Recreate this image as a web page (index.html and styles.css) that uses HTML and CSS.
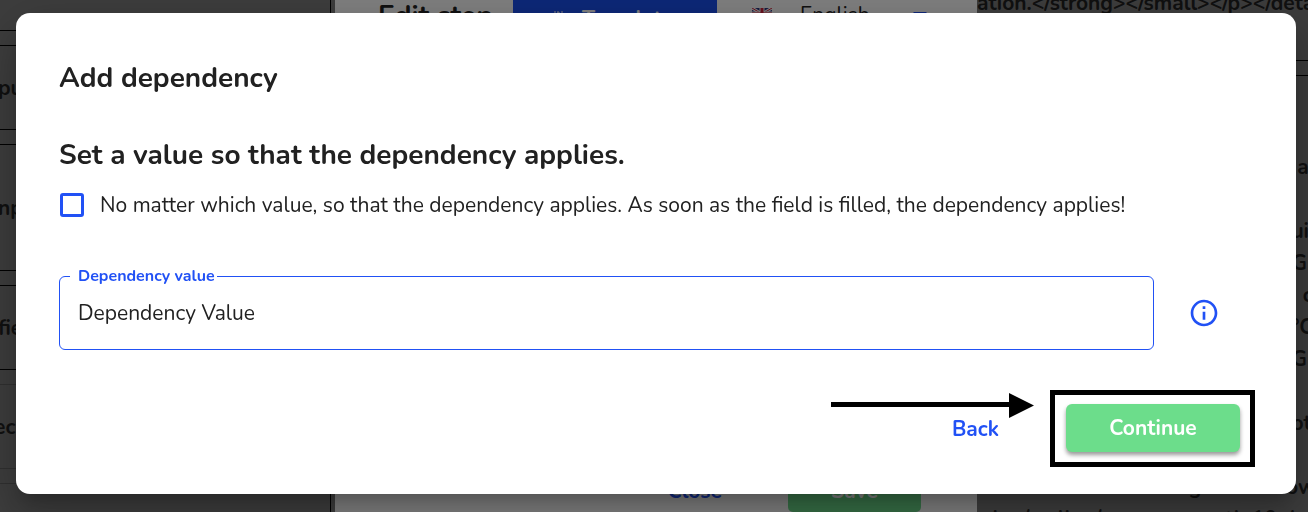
FILE: index.html
```html
<!DOCTYPE html>
<html lang="en">
<head>
    <meta charset="UTF-8">
    <meta name="viewport" content="width=device-width, initial-scale=1">
    <title>Add dependency</title>
    <link rel="stylesheet" href="styles.css">
</head>
<body>

<!-- page behind the dialog -->
<div class="page" aria-hidden="true">
    <div class="fields">
        <div class="field-card field-card-first"></div>
        <div class="field-card">put</div>
        <div class="field-card field-card-tall">np</div>
        <div class="field-card">field</div>
        <div class="field-card field-card-muted">eck</div>
        <div class="field-card field-card-muted"></div>
    </div>

    <div class="editor">
        <div class="editor-header">
            <span class="editor-title">Edit step</span>
            <span class="translate">
                <svg class="translate-icon" viewBox="0 0 14 14" width="14" height="14">
                    <path d="M3 1h2M6 2h3M10 1h2M7 0v13M1 4h12M3 4l8 8M11 4l-8 8" stroke="#fff" stroke-width="1"/>
                </svg>
                <span>Translate</span>
            </span>
            <span class="language">
                <svg class="flag" viewBox="0 0 20 12" width="20" height="12">
                    <rect width="20" height="12" fill="#2a3580"/>
                    <path d="M0 0l20 12M20 0L0 12" stroke="#fff" stroke-width="3"/>
                    <path d="M0 0l20 12M20 0L0 12" stroke="#d0203a" stroke-width="1"/>
                    <path d="M10 0v12M0 6h20" stroke="#fff" stroke-width="5"/>
                    <path d="M10 0v12M0 6h20" stroke="#d0203a" stroke-width="3"/>
                </svg>
                <span>English</span>
                <span class="caret"></span>
            </span>
        </div>
        <div class="editor-footer">
            <span class="editor-close">Close</span>
            <span class="editor-save">Save</span>
        </div>
    </div>

    <div class="preview">
        <div class="preview-head">ation.&lt;/strong&gt;&lt;/small&gt;&lt;/p&gt;&lt;/details&gt;</div>
        <div class="preview-body">
            <div class="line">&nbsp;a</div>
            <div class="line"></div>
            <div class="line">uin</div>
            <div class="line">G</div>
            <div class="line">&nbsp;&nbsp;c</div>
            <div class="line">°C</div>
            <div class="line">G</div>
            <div class="line">.</div>
            <div class="line">ot</div>
            <div class="line"></div>
            <div class="line line-long">g rooms now</div>
            <div class="line line-full">alen/mellen/measurementh 10 d</div>
        </div>
    </div>
</div>

<div class="backdrop">
    <div class="dialog" role="dialog" aria-labelledby="dialog-title">
        <h1 id="dialog-title">Add dependency</h1>
        <h2>Set a value so that the dependency applies.</h2>

        <div class="check-row">
            <input type="checkbox" id="any-value">
            <label for="any-value">No matter which value, so that the dependency applies. As soon as the field is filled, the dependency applies!</label>
        </div>

        <div class="value-row">
            <fieldset class="value-field">
                <legend><label for="dep-value">Dependency value</label></legend>
                <input type="text" id="dep-value" value="Dependency Value">
            </fieldset>
            <button type="button" class="info" aria-label="Info">
                <svg viewBox="0 0 24 24" width="32" height="32">
                    <path fill="currentColor" d="M11 7h2v2h-2zm0 4h2v6h-2zm1-9C6.480 2 2 6.480 2 12s4.480 10 10 10 10-4.480 10-10S17.520 2 12 2zm0 18c-4.410 0-8-3.590-8-8s3.590-8 8-8 8 3.590 8 8-3.590 8-8 8z"/>
                </svg>
            </button>
        </div>

        <div class="actions">
            <div class="back-wrap">
                <button type="button" class="back">Back</button>
                <svg class="arrow" viewBox="0 0 203 26" width="203" height="26">
                    <path d="M0 9h178V0l25 12.500L178 25V14H0z"/>
                </svg>
            </div>
            <div class="highlight">
                <button type="button" class="continue">Continue</button>
            </div>
        </div>
    </div>
</div>

</body>
</html>
```
FILE: styles.css
```css
* {
    box-sizing: border-box;
}
body {
    margin: 0;
    font-family: Nunito, Lato, "Open Sans", sans-serif;
    font-size: 21px;
    color: #212121;
    overflow: hidden;
}
button,
input {
    font: inherit;
}

/* page behind the dialog */
.page {
    display: grid;
    grid-template-columns: 335fr 642fr 331fr;
    height: 100vh;
    overflow: hidden;
    background: #7a7a7a;
}
.fields {
    display: flex;
    flex-direction: column;
    gap: 14px;
    margin-right: 4px;
    border-right: 1px solid #000;
    overflow: hidden;
    font-weight: bold;
}
.field-card {
    flex: none;
    display: flex;
    align-items: center;
    height: 85px;
    border: solid #000;
    border-width: 1px 0;
    text-indent: -2px;
}
.field-card-first {
    height: 31px;
    border-top: none;
}
.field-card-tall {
    height: 127px;
}
.field-card-muted {
    border-color: #606060;
    text-indent: -6px;
}
.editor {
    display: flex;
    flex-direction: column;
    justify-content: space-between;
    background: #fff;
}
.editor-header {
    display: flex;
    height: 44px;
}
.editor-title {
    width: 178px;
    padding-left: 43px;
    font-size: 28px;
    line-height: 32px;
    font-weight: bold;
    white-space: nowrap;
}
.translate {
    display: flex;
    gap: 17px;
    width: 204px;
    padding-left: 38px;
    background: #1a50f0;
    color: #fff;
    line-height: 38px;
    font-weight: bold;
}
.translate-icon {
    margin-top: 11px;
}
.language {
    display: flex;
    align-items: flex-start;
    padding: 0 0 0 35px;
    line-height: 30px;
}
.flag {
    margin: 8px 28px 0 0;
}
.caret {
    margin: 12px 0 0 43px;
    border: 7px solid transparent;
    border-top-color: #2151f5;
}
.editor-footer {
    display: flex;
    justify-content: flex-end;
    gap: 66px;
    height: 48px;
    padding-right: 56px;
    line-height: 54px;
    font-weight: bold;
}
.editor-close {
    color: #2151f5;
}
.editor-save {
    width: 133px;
    border-radius: 5px;
    background: #6cdd8b;
    color: #fff;
    text-align: center;
}
.preview {
    overflow: hidden;
    font-weight: bold;
    white-space: nowrap;
}
.preview-head {
    height: 61px;
    border-bottom: 1px solid #000;
    line-height: 6px;
}
.preview-body {
    margin-top: 14px;
    padding-top: 75px;
    border-top: 1px solid #000;
}
.line {
    height: 32px;
    padding-left: 95%;
    line-height: 32px;
}
.line-long {
    padding-left: 64%;
}
.line-full {
    padding-left: 4px;
}

/* dialog */
.backdrop {
    position: fixed;
    inset: 0;
    padding: 13px 12px 18px 16px;
    background: rgba(0, 0, 0, 0.5);
}
.dialog {
    height: 100%;
    padding: 46px 41px 0 43px;
    border-radius: 14px;
    background: #fff;
    box-shadow: 0 11px 15px -7px rgba(0, 0, 0, 0.2),
        0 24px 38px 3px rgba(0, 0, 0, 0.14),
        0 9px 46px 8px rgba(0, 0, 0, 0.12);
}
h1,
h2 {
    margin: 0;
    font-size: 28px;
    line-height: 38px;
    font-weight: bold;
}
h2 {
    margin-top: 39px;
}
.check-row {
    display: flex;
    align-items: center;
    gap: 16px;
    margin-top: 15px;
    line-height: 32px;
}
.check-row input {
    appearance: none;
    flex: none;
    width: 24px;
    height: 24px;
    margin: 0 0 0 1px;
    border: 3px solid #2151f5;
    border-radius: 3px;
}
.value-row {
    display: flex;
    align-items: center;
    gap: 34px;
    margin-top: 46px;
}
.value-field {
    flex: 1;
    min-width: 0;
    height: 83px;
    margin: 0;
    padding: 0 10px;
    border: 1px solid #2151f5;
    border-radius: 6px;
}
.value-field legend {
    padding: 0 2px 0 8px;
    color: #2151f5;
    font-size: 16px;
    line-height: 18px;
    font-weight: bold;
}
.value-field input {
    display: block;
    width: 100%;
    height: 56px;
    padding: 0 8px;
    border: none;
    outline: none;
    background: none;
    color: inherit;
}
.info {
    display: flex;
    margin: 8px 35px 0 0;
    padding: 0;
    border: none;
    background: none;
    color: #2151f5;
}
.actions {
    display: flex;
    justify-content: flex-end;
    align-items: center;
    gap: 51px;
    margin-top: 40px;
}
.back-wrap {
    position: relative;
}
.back {
    padding: 0;
    border: none;
    background: none;
    color: #2151f5;
    font-weight: bold;
}
.arrow {
    position: absolute;
    right: -35px;
    bottom: 24px;
}
.highlight {
    padding: 9px 10px 10px 11px;
    border: 5px solid #000;
}
.continue {
    display: block;
    width: 174px;
    height: 48px;
    border: none;
    border-radius: 6px;
    background: #6cdd8b;
    color: #fff;
    font-weight: bold;
    box-shadow: 0 3px 4px rgba(0, 0, 0, 0.4);
}
```
